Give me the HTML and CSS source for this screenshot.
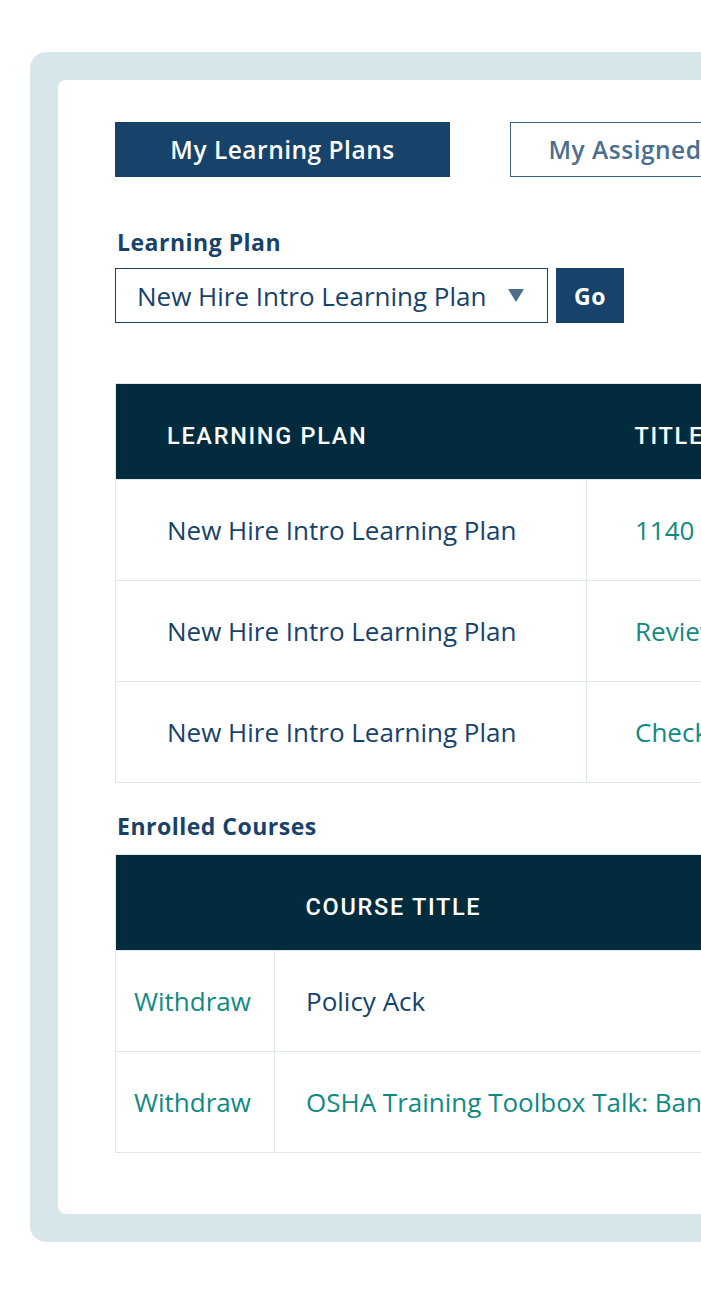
FILE: index.html
```html
<!DOCTYPE html>
<html lang="en">
<head>
    <meta charset="UTF-8">
    <meta name="viewport" content="width=device-width, initial-scale=1.0">
    <title>My Learning Plans</title>
    <link rel="stylesheet" href="styles.css">
</head>
<body>
    <div class="viewport">
        <div class="frame">
            <div class="panel">
                <div class="tabs">
                    <button class="tab active">My Learning Plans</button>
                    <button class="tab">My Assigned Courses</button>
                </div>

                <label class="field-label" for="plan">Learning Plan</label>
                <div class="plan-picker">
                    <div class="select" id="plan">
                        <span>New Hire Intro Learning Plan</span>
                        <svg class="caret" width="16" height="13" viewBox="0 0 16 13"><path d="M0 0 H16 L8 13 Z" fill="#4d6f8c"/></svg>
                    </div>
                    <button class="go">Go</button>
                </div>

                <table class="grid plans">
                    <thead>
                        <tr>
                            <th class="col-plan">Learning Plan</th>
                            <th class="col-title">Title</th>
                            <th>Status</th>
                        </tr>
                    </thead>
                    <tbody>
                        <tr>
                            <td class="col-plan">New Hire Intro Learning Plan</td>
                            <td class="col-title"><a href="#">1140 Manual Handling Awareness</a></td>
                            <td>Not Started</td>
                        </tr>
                        <tr>
                            <td class="col-plan">New Hire Intro Learning Plan</td>
                            <td class="col-title"><a href="#">Review Company Policies</a></td>
                            <td>Not Started</td>
                        </tr>
                        <tr>
                            <td class="col-plan">New Hire Intro Learning Plan</td>
                            <td class="col-title"><a href="#">Check In With Your Manager</a></td>
                            <td>Not Started</td>
                        </tr>
                    </tbody>
                </table>

                <h3 class="field-label section">Enrolled Courses</h3>
                <table class="grid courses">
                    <thead>
                        <tr>
                            <th class="col-action"></th>
                            <th class="col-course">Course Title</th>
                            <th>Enrolled</th>
                        </tr>
                    </thead>
                    <tbody>
                        <tr>
                            <td class="col-action"><a href="#">Withdraw</a></td>
                            <td class="col-course">Policy Ack</td>
                            <td>01/12/2024</td>
                        </tr>
                        <tr>
                            <td class="col-action"><a href="#">Withdraw</a></td>
                            <td class="col-course"><a href="#">OSHA Training Toolbox Talk: Bandsaw Safety</a></td>
                            <td>01/12/2024</td>
                        </tr>
                    </tbody>
                </table>
            </div>
        </div>
    </div>
</body>
</html>
```

FILE: styles.css
```css
body {
    margin: 0;
    font-family: "Open Sans", "Liberation Sans", sans-serif;
    color: #17426a;
    background-color: #fff;
}
.viewport {
    width: 701px;
    overflow: hidden;
    padding: 52px 0 58px 30px;
    box-sizing: border-box;
}
.frame {
    width: 1700px;
    padding: 28px;
    background-color: #d7e6eb;
    border-radius: 16px;
}
.panel {
    background-color: #fff;
    border-radius: 8px;
    padding: 42px 57px 61px;
}
.tabs {
    display: flex;
    gap: 60px;
    margin-bottom: 50px;
}
.tab {
    width: 335px;
    height: 55px;
    padding: 0;
    font-family: inherit;
    font-size: 24.5px;
    font-weight: 600;
    letter-spacing: 0.5px;
    color: #4a6f8e;
    background-color: #fff;
    border: 1px solid #3d5f80;
    cursor: pointer;
}
.tab.active {
    color: #fff;
    background-color: #17426a;
    border-color: #17426a;
}
.field-label {
    display: block;
    margin: 0 0 11px 2px;
    font-size: 23px;
    font-weight: 700;
    letter-spacing: 0.5px;
    line-height: 30px;
}
.field-label.section {
    margin: 28px 0 13px 2px;
}
.plan-picker {
    display: flex;
    gap: 8px;
    margin-bottom: 60px;
}
.select {
    width: 433px;
    height: 55px;
    box-sizing: border-box;
    display: flex;
    align-items: center;
    justify-content: space-between;
    padding: 0 23px 0 21px;
    border: 1px solid #17426a;
    font-size: 26px;
    line-height: 30px;
}
.go {
    width: 68px;
    height: 55px;
    padding: 0;
    font-family: inherit;
    font-size: 23px;
    font-weight: 700;
    letter-spacing: 0.5px;
    color: #fff;
    background-color: #17426a;
    border: none;
}
.grid {
    border-collapse: collapse;
    border: 1px solid #dde7ec;
    white-space: nowrap;
    font-size: 26px;
    line-height: 30px;
}
.grid th {
    height: 96px;
    padding: 9px 50px 0;
    box-sizing: border-box;
    text-align: left;
    font-family: Roboto, "Liberation Sans", sans-serif;
    font-size: 23.5px;
    font-weight: 500;
    letter-spacing: 1.7px;
    text-transform: uppercase;
    color: #fff;
    background-color: #032b3e;
}
.grid td {
    height: 100px;
    padding: 0 50px;
    border: 1px solid #dde7ec;
}
.grid a {
    color: #0f8a82;
    text-decoration: none;
}
.plans .col-plan {
    width: 369px;
    padding-left: 51px;
}
.plans .col-title {
    width: 400px;
    padding-left: 48px;
}
.courses .col-action {
    width: 122px;
    padding: 0 18px;
}
.courses .col-course {
    width: 460px;
    padding-left: 31px;
}
```
